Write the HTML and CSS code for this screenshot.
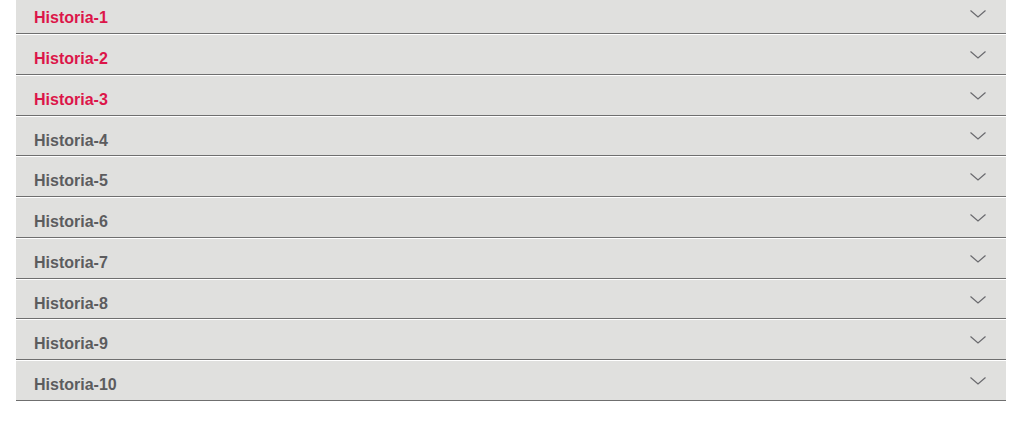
FILE: index.html
```html
<!DOCTYPE html>
<html lang="es">
<head>
<meta charset="utf-8">
<title>Historias</title>
<link rel="stylesheet" href="styles.css">
</head>
<body>
<ul class="accordion">
  <li class="item active"><span class="title">Historia-1</span><svg class="chev" viewBox="0 0 16 8"><path d="M0.5 0.5 L8 7 L15.5 0.5"/></svg></li>
  <li class="item active"><span class="title">Historia-2</span><svg class="chev" viewBox="0 0 16 8"><path d="M0.5 0.5 L8 7 L15.5 0.5"/></svg></li>
  <li class="item active"><span class="title">Historia-3</span><svg class="chev" viewBox="0 0 16 8"><path d="M0.5 0.5 L8 7 L15.5 0.5"/></svg></li>
  <li class="item"><span class="title">Historia-4</span><svg class="chev" viewBox="0 0 16 8"><path d="M0.5 0.5 L8 7 L15.5 0.5"/></svg></li>
  <li class="item"><span class="title">Historia-5</span><svg class="chev" viewBox="0 0 16 8"><path d="M0.5 0.5 L8 7 L15.5 0.5"/></svg></li>
  <li class="item"><span class="title">Historia-6</span><svg class="chev" viewBox="0 0 16 8"><path d="M0.5 0.5 L8 7 L15.5 0.5"/></svg></li>
  <li class="item"><span class="title">Historia-7</span><svg class="chev" viewBox="0 0 16 8"><path d="M0.5 0.5 L8 7 L15.5 0.5"/></svg></li>
  <li class="item"><span class="title">Historia-8</span><svg class="chev" viewBox="0 0 16 8"><path d="M0.5 0.5 L8 7 L15.5 0.5"/></svg></li>
  <li class="item"><span class="title">Historia-9</span><svg class="chev" viewBox="0 0 16 8"><path d="M0.5 0.5 L8 7 L15.5 0.5"/></svg></li>
  <li class="item"><span class="title">Historia-10</span><svg class="chev" viewBox="0 0 16 8"><path d="M0.5 0.5 L8 7 L15.5 0.5"/></svg></li>
</ul>
</body>
</html>
```

FILE: styles.css
```css
html, body {
  margin: 0;
  padding: 0;
  background: #ffffff;
}

.accordion {
  list-style: none;
  margin: -5.7px 0 0 16px;
  padding: 0;
  width: 990px;
  font-family: "Liberation Sans", Arial, sans-serif;
}

.item {
  display: flex;
  justify-content: space-between;
  align-items: flex-start;
  box-sizing: border-box;
  height: 39.78px;
  margin-bottom: 1px;
  padding: 0 20px 0 18px;
  background: #e0e0de;
  border-bottom: 1px solid #6f6f6f;
}

.title {
  padding-top: 15px;
  font-size: 16px;
  font-weight: bold;
  line-height: 18px;
  color: #5c5c5e;
}

.item.active .title {
  color: #dc1549;
}

.chev {
  align-self: center;
  width: 16px;
  height: 8px;
  margin-top: 1px;
  fill: none;
  stroke: #6a6a6e;
  stroke-width: 1.2;
}
```
